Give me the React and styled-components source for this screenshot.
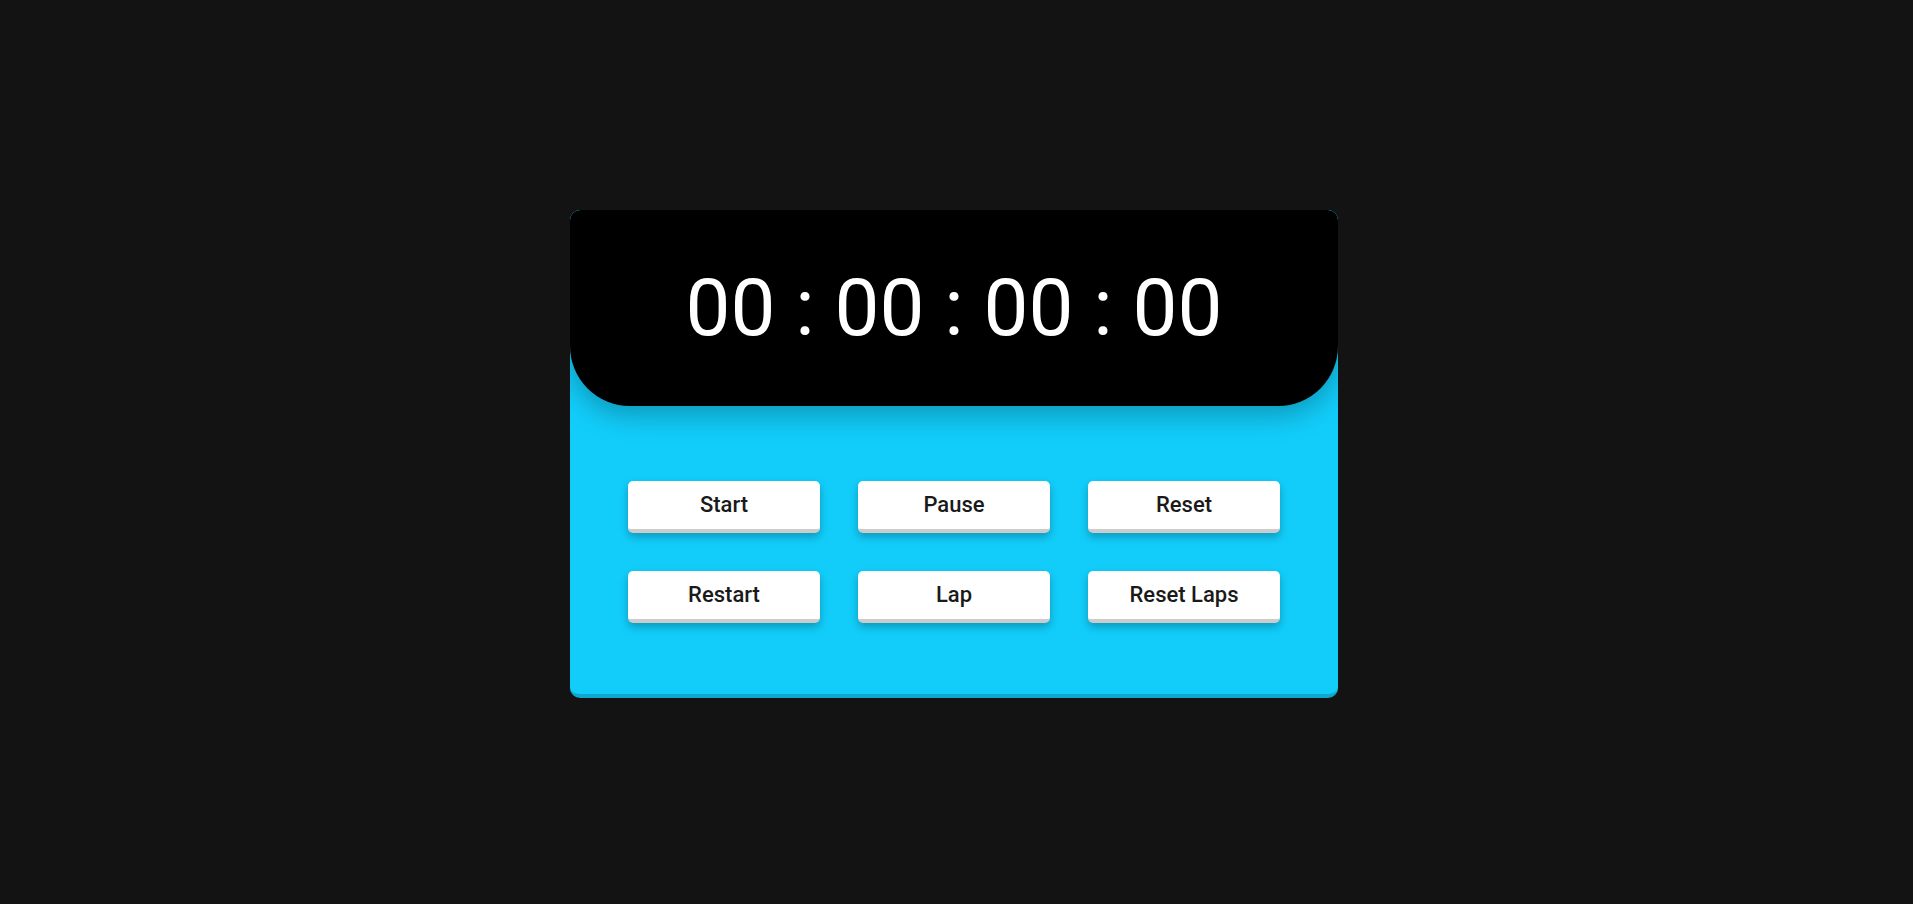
import styled, { createGlobalStyle } from "styled-components";

const GlobalStyle = createGlobalStyle`
  html, body {
    margin: 0;
    padding: 0;
    background: #131313;
  }
  body {
    font-family: Roboto, "Liberation Sans", sans-serif;
  }
`;

const Page = styled.div`
  min-height: 100vh;
  box-sizing: border-box;
  padding-top: 3px;
  display: flex;
  align-items: center;
  justify-content: center;
`;

const Card = styled.div`
  width: 768px;
  background: #12cdfa;
  border-radius: 10px;
  border-bottom: 4px solid #0ea8cf;
  overflow: hidden;
  margin-left: -5px;
`;

const Display = styled.div`
  height: 196px;
  background: #000;
  border-radius: 10px 10px 60px 60px;
  display: flex;
  align-items: center;
  justify-content: center;
  color: #fff;
  font-size: 80px;
  font-weight: 400;
  box-shadow: 0 8px 28px rgba(0, 0, 0, 0.28);
  position: relative;
  z-index: 1;
`;

const Controls = styled.div`
  display: grid;
  grid-template-columns: repeat(3, 192px);
  column-gap: 38px;
  row-gap: 38px;
  justify-content: center;
  padding: 75px 0 71px;
`;

const Button = styled.button`
  height: 52px;
  border: none;
  border-bottom: 4px solid #cccccc;
  border-radius: 5px;
  background: #fff;
  color: #1a1a1a;
  font-family: Roboto, "Liberation Sans", sans-serif;
  font-size: 22px;
  font-weight: 500;
  padding: 0;
  cursor: pointer;
  box-shadow: 0 4px 9px rgba(0, 0, 0, 0.26);
`;

const buttons = ["Start", "Pause", "Reset", "Restart", "Lap", "Reset Laps"];

export default function App() {
  return (
    <>
      <GlobalStyle />
      <Page>
        <Card>
          <Display>00 : 00 : 00 : 00</Display>
          <Controls>
            {buttons.map(label => (
              <Button key={label}>{label}</Button>
            ))}
          </Controls>
        </Card>
      </Page>
    </>
  );
}
